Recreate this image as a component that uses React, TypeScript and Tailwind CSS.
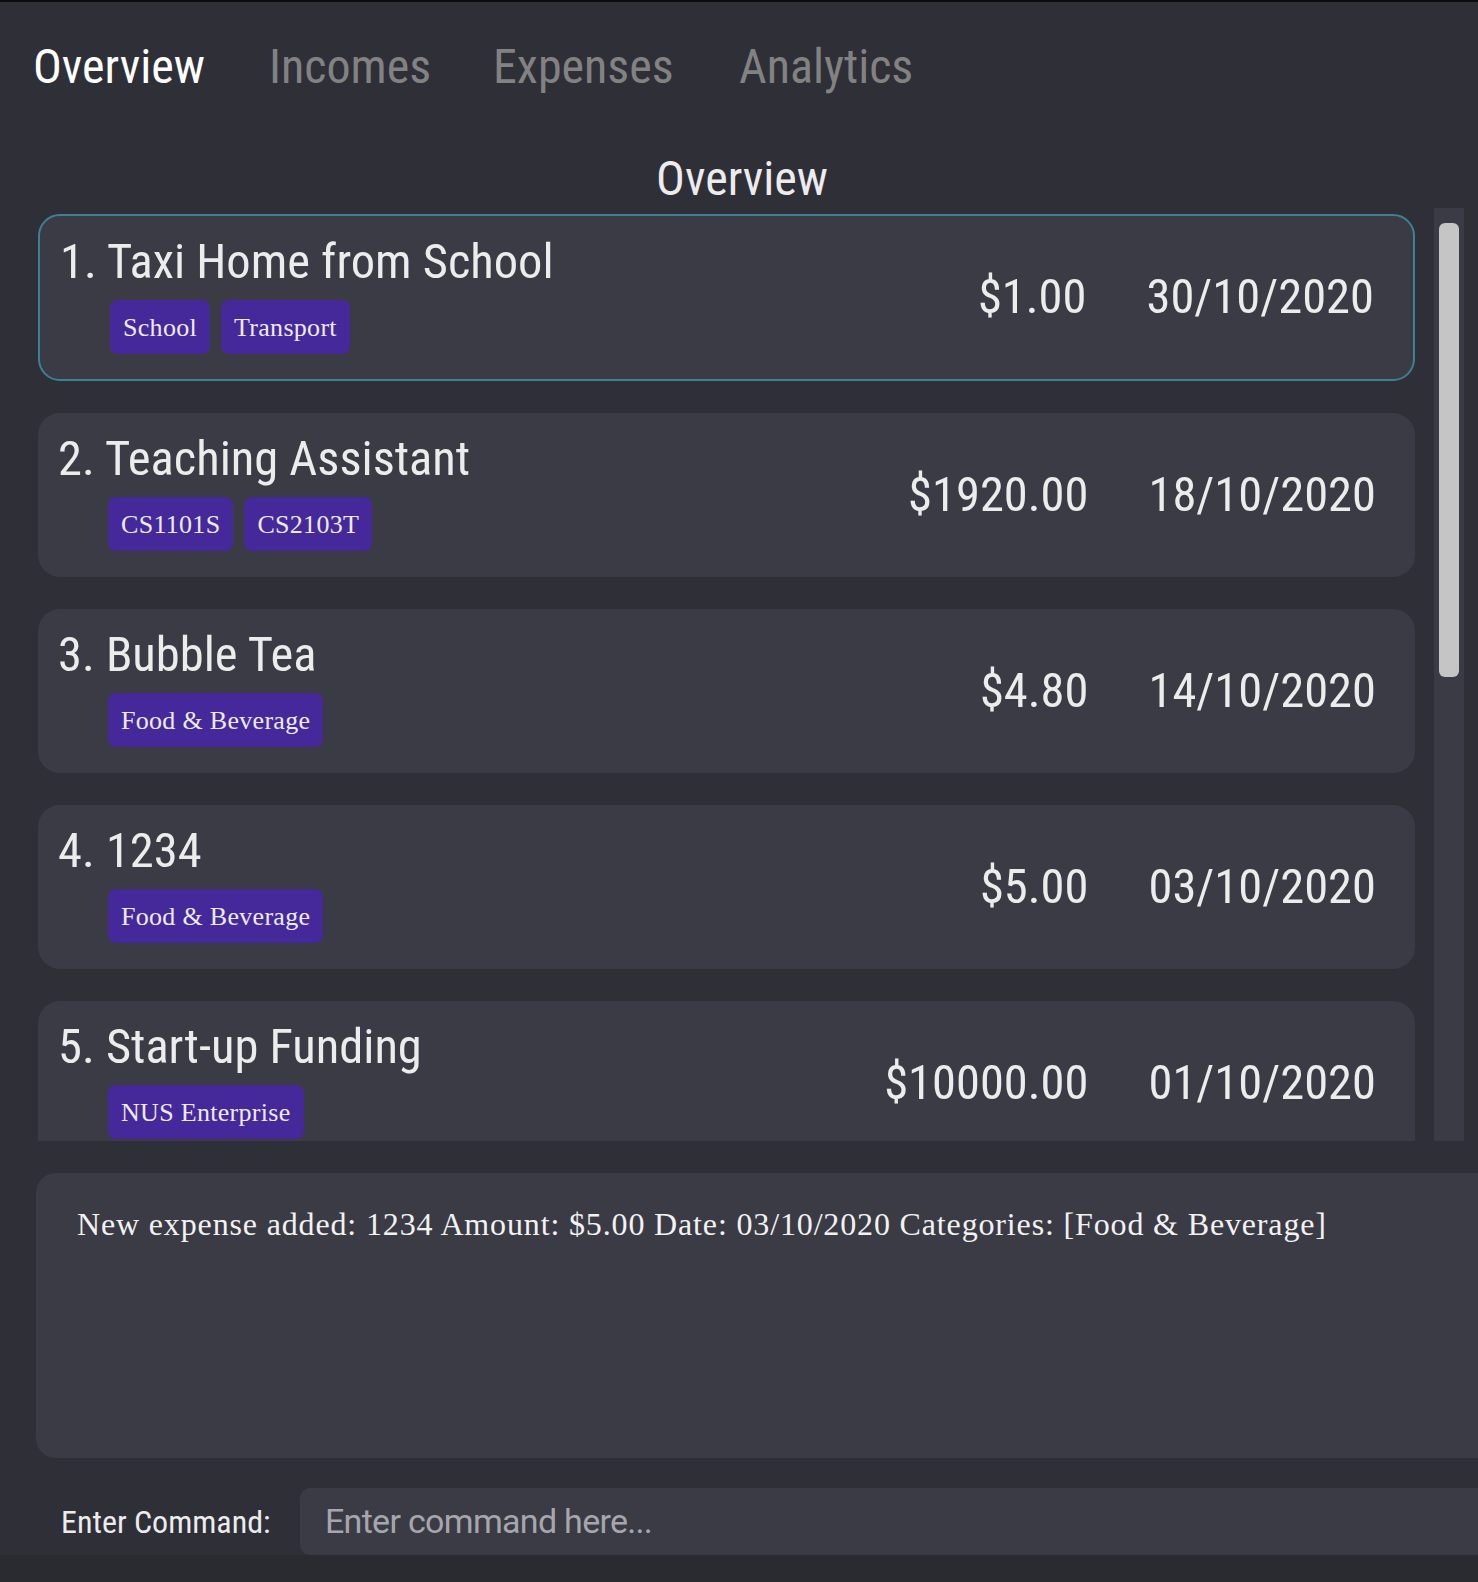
import React from "react";

const cond = "font-['Roboto_Condensed','Liberation_Sans_Narrow','DejaVu_Sans_Condensed',sans-serif] [font-stretch:condensed]";
const serif = "font-['Liberation_Serif','DejaVu_Serif',serif]";

const items = [
  { id: 1, title: "Taxi Home from School", tags: ["School", "Transport"], amount: "$1.00", date: "30/10/2020" },
  { id: 2, title: "Teaching Assistant", tags: ["CS1101S", "CS2103T"], amount: "$1920.00", date: "18/10/2020" },
  { id: 3, title: "Bubble Tea", tags: ["Food & Beverage"], amount: "$4.80", date: "14/10/2020" },
  { id: 4, title: "1234", tags: ["Food & Beverage"], amount: "$5.00", date: "03/10/2020" },
  { id: 5, title: "Start-up Funding", tags: ["NUS Enterprise"], amount: "$10000.00", date: "01/10/2020" },
];

const tabs = ["Overview", "Incomes", "Expenses", "Analytics"];

function Card({ item, selected }: { item: (typeof items)[0]; selected: boolean }) {
  return (
    <div
      className={`shrink-0 rounded-[22px] bg-[#3b3b45] flex items-stretch ${
        selected ? "h-[167px] border-2 border-[#3d8196]" : "h-[164px]"
      }`}
    >
      <div className="flex-1 pl-[20px] pt-[22px]">
        <div className={`${cond} text-[48.5px] leading-[48px] text-[#ececec]`}>
          {item.id}. {item.title}
        </div>
        <div className="flex gap-[11px] mt-[14px] ml-[50px]">
          {item.tags.map((t) => (
            <span
              key={t}
              className={`${serif} h-[54px] px-[13px] flex items-center rounded-[8px] bg-[#45289a] text-[26px] tracking-[0.3px] text-[#ecebf5]`}
            >
              {t}
            </span>
          ))}
        </div>
      </div>
      <div className={`${cond} flex items-center gap-[60px] pr-[39px] text-[48.5px] text-[#ececec]`}>
        <span className="text-right">{item.amount}</span>
        <span>{item.date}</span>
      </div>
    </div>
  );
}

export default function App() {
  return (
    <div className="w-[1478px] h-[1582px] bg-[#2f2f38] border-t-2 border-[#0c0c0e] flex flex-col overflow-hidden">
      {/* Tabs */}
      <div className={`${cond} flex pl-[33px] pt-[41px] h-[152px] text-[48px] leading-[48px]`}>
        {tabs.map((t, i) => (
          <span
            key={t}
            className={`${i === 0 ? "text-white" : "text-[#828282]"} ${
              i === 0 ? "w-[236px]" : i === 1 ? "w-[224px]" : i === 2 ? "w-[246px]" : ""
            }`}
          >
            {t}
          </span>
        ))}
      </div>

      {/* Heading */}
      <div className={`${cond} text-center pl-[6px] pt-[2px] h-[54px] text-[48px] leading-[46px] text-[#ececec]`}>Overview</div>

      {/* List + scrollbar */}
      <div className="flex h-[933px] shrink-0">
        <div className="ml-[38px] w-[1377px] pt-[6px] flex flex-col gap-[32px] overflow-hidden">
          {items.map((it, i) => (
            <Card key={it.id} item={it} selected={i === 0} />
          ))}
        </div>
        <div className="ml-[19px] w-[30px] bg-[#3b3b45] pt-[15px] flex justify-center">
          <div className="w-[20px] h-[454px] rounded-[6px] bg-[#c5c5c5]" />
        </div>
      </div>

      {/* Result box */}
      <div className="mt-[32px] ml-[36px] h-[285px] shrink-0 rounded-l-[20px] bg-[#3b3b45] pl-[41px] pt-[27px]">
        <div className={`${serif} text-[32px] tracking-[0.85px] text-[#f2f2f2] whitespace-nowrap`}>
          New expense added: 1234 Amount: $5.00 Date: 03/10/2020 Categories: [Food &amp; Beverage]
        </div>
      </div>

      {/* Command row */}
      <div className="mt-[30px] flex items-center h-[67px] shrink-0">
        <span className={`${cond} ml-[61px] w-[239px] text-[32px] text-[#ececec]`}>Enter Command:</span>
        <div className="flex-1 h-full rounded-l-[10px] bg-[#3b3b45] flex items-center pl-[25px]">
          <span className="font-['Roboto',sans-serif] text-[34px] tracking-[-0.7px] text-[#a6a6ac]">
            Enter command here...
          </span>
        </div>
      </div>
      <div className="flex-1 bg-[#2a2a31]" />
    </div>
  );
}
